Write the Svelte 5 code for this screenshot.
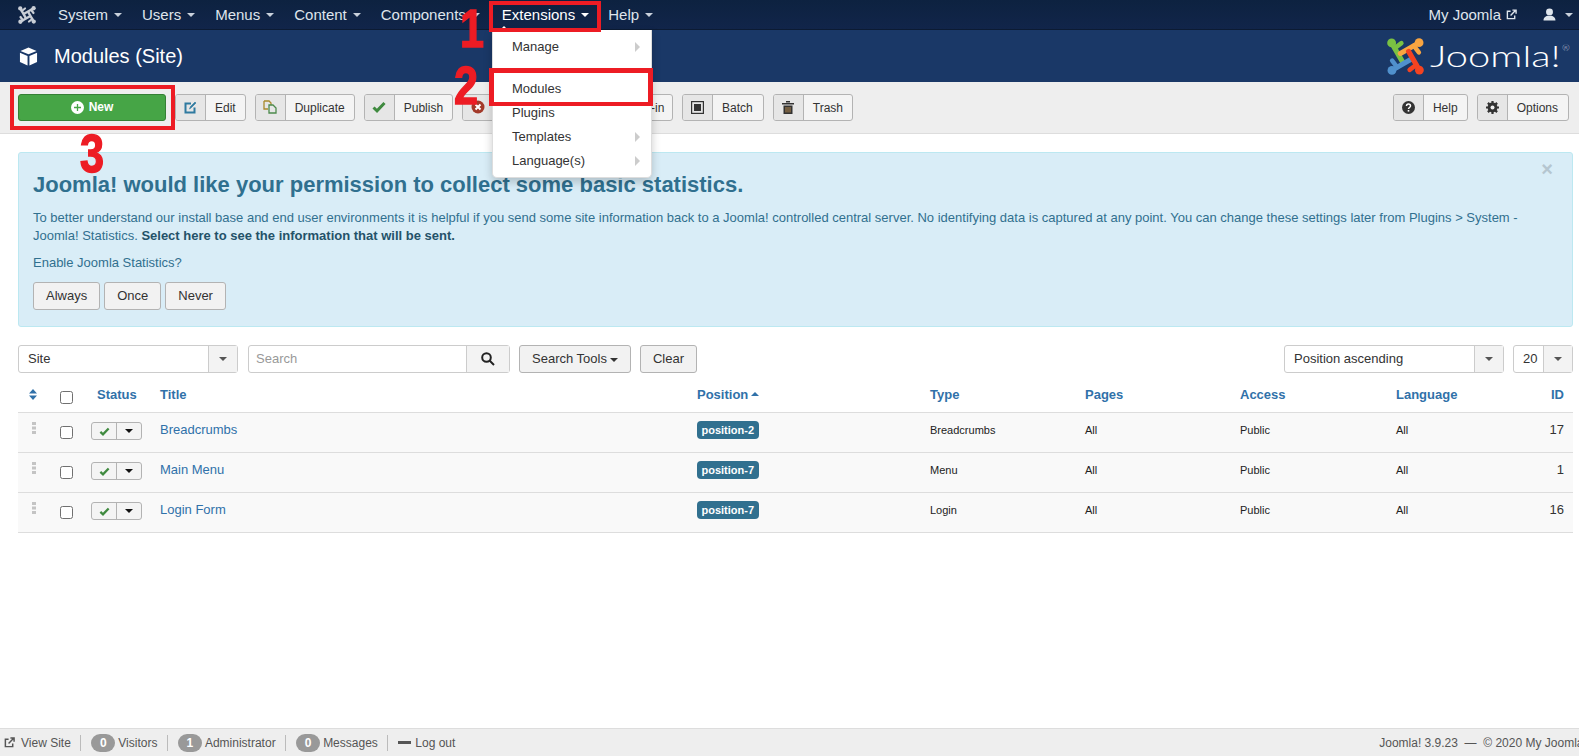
<script>
  const menu = ['System', 'Users', 'Menus', 'Content', 'Components'];
  const rows = [
    { title: 'Breadcrumbs', pos: 'position-2', type: 'Breadcrumbs', id: 17 },
    { title: 'Main Menu', pos: 'position-7', type: 'Menu', id: 1 },
    { title: 'Login Form', pos: 'position-7', type: 'Login', id: 16 }
  ];
</script>

{#snippet joomla(c1, c2, c3, c4, size)}
  <svg class="jlogo" width={size} height={size} viewBox="0 0 36 36">
    {#each [[0, c1], [90, c2], [270, c4], [180, c3]] as [r, c]}
      <g transform="rotate({r} 18 18)" fill={c} stroke={c} stroke-linecap="round" stroke-linejoin="round">
        <circle cx="4.500" cy="4.800" r="4.300" stroke="none" />
        <path d="M5 5.500 L15 23" fill="none" stroke-width="5" />
        <path d="M7.500 10 L14 5" fill="none" stroke-width="4.400" />
      </g>
    {/each}
  </svg>
{/snippet}

{#snippet caret()}<i class="caret"></i>{/snippet}

<div class="page">
  <nav class="topnav">
    <span class="brand">{@render joomla('#c9ced6', '#c9ced6', '#c9ced6', '#c9ced6', 18)}</span>
    {#each menu as m}
      <span class="navitem">{m}{@render caret()}</span>
    {/each}
    <span class="navitem ext">Extensions{@render caret()}</span>
    <span class="navitem help">Help{@render caret()}</span>
    <span class="navright">
      <span class="navitem myj">My Joomla
        <svg width="11" height="11" viewBox="0 0 12 12" fill="none" stroke="#dfe5ec" stroke-width="1.500"><path d="M9.500 7v3.500h-8v-8H5"/><path d="M5 7l5-5M7 1.200h4v4" /></svg>
      </span>
      <span class="navitem user">
        <svg width="13" height="13" viewBox="0 0 12 12" fill="#dfe5ec"><circle cx="6" cy="3.600" r="3.200"/><path d="M0.500 11.500c0-3 2-3.600 3.600-4.300h3.800c1.600.7 3.600 1.300 3.600 4.300z"/></svg>
        {@render caret()}
      </span>
    </span>
  </nav>

  <header class="titlebar">
    <svg class="cube" width="19" height="19" viewBox="0 0 20 20" fill="#fff"><path d="M10 0.500l8.500 3.600L10 7.700 1.500 4.100z"/><path d="M1 6l8 3.400V19.500L1 15.800z"/><path d="M19 6l-8 3.400V19.500l8-3.700z"/></svg>
    <h1>Modules (Site)</h1>
    <span class="logo">
      {@render joomla('#7ac143', '#f9a541', '#f44321', '#5091cd', 37)}
      <span class="wordmark"><span>Joomla!<sup>®</sup></span></span>
    </span>
  </header>

  <div class="toolbar">
    <button class="new"><svg width="13" height="13" viewBox="0 0 13 13"><circle cx="6.500" cy="6.500" r="6.500" fill="#fff"/><path d="M6.500 3v7M3 6.500h7" stroke="#46a546" stroke-width="1.300"/></svg>New</button>
    <button class="tb"><span class="ic">
      <svg width="13" height="13" viewBox="0 0 13 13" fill="none" stroke="#2f7aa0" stroke-width="2"><path d="M7 2.500H1.500v9h9V6.500"/><path d="M5.500 8l1-2.500L11 1l1 1-4.500 4.500z" fill="#2f7aa0" stroke-width=".6"/></svg>
    </span><span class="lb">Edit</span></button>
    <button class="tb"><span class="ic">
      <svg width="14" height="14" viewBox="0 0 14 14" fill="none" stroke-width="1.300"><path d="M1 1h5l2 2v2" stroke="#a98a2d"/><path d="M1 1v8h4" stroke="#a98a2d"/><path d="M6 5h4l3 3v5H6z" stroke="#4c8a4c"/></svg>
    </span><span class="lb">Duplicate</span></button>
    <button class="tb"><span class="ic">
      <svg width="14" height="12" viewBox="0 0 14 12" fill="none" stroke="#3f8a3f" stroke-width="3"><path d="M1.500 6.500l3.500 3.300L12.500 2"/></svg>
    </span><span class="lb">Publish</span></button>
    <button class="tb unpub"><span class="ic">
      <svg width="14" height="14" viewBox="0 0 14 14"><circle cx="7" cy="7" r="6.500" fill="#a33a2a"/><path d="M4.500 4.500l5 5M9.500 4.500l-5 5" stroke="#fff" stroke-width="2"/></svg>
    </span><span class="lb">Unpublish</span></button>
    <button class="tb checkin"><span class="ic"></span><span class="lb">Check-in</span></button>
    <button class="tb wide"><span class="ic">
      <svg width="13" height="13" viewBox="0 0 13 13"><rect x=".6" y=".6" width="11.800" height="11.800" fill="none" stroke="#333" stroke-width="1.200"/><rect x="3" y="3" width="7" height="7" fill="#333"/></svg>
    </span><span class="lb">Batch</span></button>
    <button class="tb"><span class="ic">
      <svg width="12" height="13" viewBox="0 0 12 13" fill="#333"><path d="M0 2h12v1.500H0zM4 0h4v1.500H4z"/><path d="M1.500 4.500h9V13h-9z"/><path d="M4 6v5.500M6 6v5.500M8 6v5.500" stroke="#b58a50" stroke-width="1"/></svg>
    </span><span class="lb">Trash</span></button>
    <span class="spacer"></span>
    <button class="tb"><span class="ic">
      <svg width="13" height="13" viewBox="0 0 13 13"><circle cx="6.500" cy="6.500" r="6.500" fill="#333"/><path d="M4.500 5c0-2.600 4-2.600 4 0 0 1.500-2 1.500-2 3" fill="none" stroke="#fff" stroke-width="1.500"/><rect x="5.700" y="9" width="1.600" height="1.600" fill="#fff"/></svg>
    </span><span class="lb">Help</span></button>
    <button class="tb wide"><span class="ic">
      <svg width="13" height="13" viewBox="0 0 13 13"><circle cx="6.500" cy="6.500" r="3.600" fill="none" stroke="#333" stroke-width="2.600"/><path d="M6.500 0v13M0 6.500h13M1.900 1.900l9.200 9.200M11.100 1.900l-9.200 9.200" stroke="#333" stroke-width="2.200"/><circle cx="6.500" cy="6.500" r="2" fill="#eee"/></svg>
    </span><span class="lb">Options</span></button>
  </div>

  <main>
    <section class="alert">
      <span class="close">×</span>
      <h2>Joomla! would like your permission to collect some basic statistics.</h2>
      <p>To better understand our install base and end user environments it is helpful if you send some site information back to a Joomla! controlled central server. No identifying data is captured at any point. You can change these settings later from Plugins &gt; System - Joomla! Statistics. <b>Select here to see the information that will be sent.</b></p>
      <p class="q">Enable Joomla Statistics?</p>
      <div class="abtns"><button>Always</button><button>Once</button><button>Never</button></div>
    </section>

    <div class="filters">
      <div class="select site"><span>Site</span><em>{@render caret()}</em></div>
      <div class="search"><span class="ph">Search</span><em>
        <svg width="14" height="14" viewBox="0 0 14 14" fill="none" stroke="#222" stroke-width="2"><circle cx="5.500" cy="5.500" r="4.300"/><path d="M8.500 8.500l4.500 4.500"/></svg>
      </em></div>
      <button class="fbtn tools">Search Tools{@render caret()}</button>
      <button class="fbtn clear">Clear</button>
      <span class="spacer"></span>
      <div class="select sort"><span>Position ascending</span><em>{@render caret()}</em></div>
      <div class="select limit"><span>20</span><em>{@render caret()}</em></div>
    </div>

    <div class="grid head">
      <span class="c"><svg width="8" height="11" viewBox="0 0 8 11" fill="#3071a9"><path d="M4 0l4 4.500H0zM4 11L0 6.500h8z"/></svg></span>
      <span class="cb"><i class="check"></i></span>
      <span class="st">Status</span>
      <span>Title</span>
      <span>Position<i class="up"></i></span>
      <span>Type</span>
      <span>Pages</span>
      <span>Access</span>
      <span>Language</span>
      <span class="r">ID</span>
    </div>
    {#each rows as row}
      <div class="grid row">
        <span class="c drag"><svg width="4" height="12" viewBox="0 0 4 12" fill="#c4c4c4"><rect width="4" height="3"/><rect y="4.500" width="4" height="3"/><rect y="9" width="4" height="3"/></svg></span>
        <span class="cb"><i class="check"></i></span>
        <span class="stc"><span class="sbtn"><b><svg width="11" height="9" viewBox="0 0 14 12" fill="none" stroke="#3f8a3f" stroke-width="3"><path d="M1.500 6.500l3.500 3.300L12.500 2"/></svg></b><b><i class="caret dark"></i></b></span></span>
        <a class="tx">{row.title}</a>
        <span class="tx"><span class="badge">{row.pos}</span></span>
        <span class="sm">{row.type}</span>
        <span class="sm">All</span>
        <span class="sm">Public</span>
        <span class="sm">All</span>
        <span class="r id tx">{row.id}</span>
      </div>
    {/each}
  </main>

  <footer class="status">
    <span class="si first"><svg width="11" height="11" viewBox="0 0 12 12" fill="none" stroke="#555" stroke-width="1.600"><path d="M9.500 7v3.500h-8v-8H5"/><path d="M5 7l5-5M7 1.200h4v4"/></svg>View Site</span>
    <span class="si"><i class="pill">0</i>Visitors</span>
    <span class="si"><i class="pill">1</i>Administrator</span>
    <span class="si"><i class="pill">0</i>Messages</span>
    <span class="si last"><i class="minus"></i>Log out</span>
    <span class="copy">Joomla! 3.9.23&nbsp; — &nbsp;© 2020 My Joomla</span>
  </footer>

  <div class="dropdown">
    <span class="di">Manage<i class="sub"></i></span>
    <span class="divider"></span>
    <span class="di">Modules</span>
    <span class="di">Plugins</span>
    <span class="di">Templates<i class="sub"></i></span>
    <span class="di">Language(s)<i class="sub"></i></span>
  </div>

  <span class="hl h1"></span>
  <span class="hl h2"></span>
  <span class="hl h3"></span>
  <span class="num n1">1</span>
  <span class="num n2">2</span>
  <span class="num n3">3</span>
</div>

<style>
  :global(body) { margin: 0; background: #fff; }
  .page { position: relative; width: 1579px; height: 756px; overflow: hidden; display: flex; flex-direction: column; font: 13px/18px "Liberation Sans", Arial, sans-serif; color: #333; }
  .topnav { height: 30px; flex: none; display: flex; align-items: center; background: linear-gradient(#0d2240, #11254a); border-bottom: 1px solid #0c1b33; box-sizing: border-box; font-size: 15px; padding-left: 18px; padding-right: 6px; }
  .brand { width: 40px; display: flex; }
  .navitem { margin-right: 20px; white-space: nowrap; color: #dfe5ec; display: flex; align-items: center; }
  .navitem.ext { color: #fff; margin-left: 2px; margin-right: 19px; }
  .navright { margin-left: auto; display: flex; align-items: center; }
  .myj svg { margin-left: 5px; }
  .myj { margin-right: 26px; }
  .navitem.user { margin-right: 0; }
  .caret { display: inline-block; width: 0; height: 0; border: 4px solid transparent; border-top-color: #c9d1dc; border-bottom: 0; margin-left: 6px; vertical-align: middle; }
  .user .caret { margin-left: 9px; }
  .ext .caret { border-top-color: #fff; }
  .caret.dark { border-top-color: #111; margin: 0; }
  .titlebar { height: 52px; flex: none; display: flex; align-items: center; background: #1a3867; padding-left: 19px; color: #fff; }
  .cube { margin-right: 16px; }
  h1 { font-size: 20px; font-weight: 400; margin: 0; }
  .logo { margin-left: auto; display: flex; align-items: center; margin-right: 17px; }
  .wordmark { width: 132px; margin-left: 6px; color: #fff; display: block; }
  .wordmark > span { display: inline-block; font: 300 30px/1 Lato, sans-serif; transform: scaleX(1.33); transform-origin: 0 50%; white-space: nowrap; }
  .wordmark sup { font-size: 7px; vertical-align: 16px; line-height: 0; color: #ccd; margin-left: 1px; }
  .toolbar { height: 52px; flex: none; box-sizing: border-box; background: #eee; border-bottom: 1px solid #ddd; display: flex; align-items: center; gap: 9px; padding: 0 10px 1px 18px; }
  .spacer { flex: 1; }
  button { font: inherit; padding: 0; cursor: pointer; }
  .new { width: 148px; height: 27px; background: #46a546; border: 1px solid #358035; border-radius: 3px; color: #fff; font-size: 12px; line-height: 27px; font-weight: 700; display: flex; align-items: center; justify-content: center; gap: 5px; }
  .tb { height: 27px; display: flex; align-items: stretch; background: #f4f4f4; border: 1px solid #b3b3b3; border-radius: 3px; font-size: 12px; color: #333; overflow: hidden; box-sizing: border-box; }
  .ic { width: 29px; flex: none; background: #e6e6e6; border-right: 1px solid #b3b3b3; display: flex; align-items: center; justify-content: center; }
  .lb { padding: 0 9px; line-height: 27px; white-space: nowrap; }
  .wide .lb { padding-right: 10px; }
  .unpub { width: 106px; }
  .checkin { width: 96px; }
  main { flex: 1; padding: 18px 6px 0 18px; min-height: 0; }
  .alert { position: relative; height: 175px; box-sizing: border-box; background: #d9edf7; border: 1px solid #bce8f1; border-radius: 3px; color: #31708f; padding: 14px 14px; font-size: 13px; }
  .alert h2 { font-size: 22px; line-height: 36px; margin: 0 0 6px; color: #30708f; }
  .alert p { margin: 0; line-height: 18px; }
  .alert p b { color: #245269; }
  .alert .q { margin-top: 9px; }
  .close { position: absolute; right: 19px; top: 6px; font-size: 20px; font-weight: 700; color: #b5c6d0; line-height: 20px; }
  .abtns { display: flex; gap: 4px; margin-top: 10px; }
  .abtns button { height: 28px; padding: 0 12px; background: #f2f2f2; border: 1px solid #b3b3b3; border-radius: 3px; font-size: 13px; color: #333; }
  .filters { display: flex; align-items: center; gap: 9px; margin-top: 18px; height: 28px; }
  .select { height: 28px; box-sizing: border-box; display: flex; background: #fff; border: 1px solid #ccc; border-radius: 3px; justify-content: space-between; line-height: 25px; padding-left: 9px; }
  .select em { width: 28px; background: #f3f3f3; border-left: 1px solid #ccc; display: flex; align-items: center; justify-content: center; }
  .select .caret { border-top-color: #555; margin: 0; }
  .site { width: 220px; margin-right: 1px; }
  .search { width: 262px; height: 28px; box-sizing: border-box; display: flex; justify-content: space-between; border: 1px solid #ccc; border-radius: 3px; padding-left: 7px; line-height: 26px; }
  .ph { color: #999; }
  .search em { width: 42px; background: #f3f3f3; border-left: 1px solid #ccc; display: flex; align-items: center; justify-content: center; }
  .fbtn { height: 28px; background: #f2f2f2; border: 1px solid #b3b3b3; border-radius: 3px; color: #333; font-size: 13px; }
  .tools { width: 112px; }
  .tools .caret { border-top-color: #333; margin-left: 3px; }
  .clear { width: 57px; }
  .sort { width: 220px; }
  .limit { width: 60px; }
  .grid { display: grid; grid-template-columns: 42px 30px 70px 537px 233px 155px 155px 156px 144px 1fr; align-items: center; }
  .grid > span, .grid > a { min-width: 0; }
  .head { height: 39px; margin-top: 1px; padding-top: 3px; font-weight: 700; color: #3071a9; border-bottom: 1px solid #ddd; font-size: 13px; box-sizing: border-box; }
  .head .cb { margin-top: 5px; }
  .row { height: 40px; background: #f9f9f9; border-bottom: 1px solid #ddd; box-sizing: border-box; align-items: start; padding-top: 9px; }
  .row a { color: #3071a9; }
  .tx { margin-top: -1px; }
  .sm { margin-top: -1px; font-size: 11px; color: #222; }
  .c { padding-left: 11px; display: flex; }
  .row .drag { padding-left: 14px; }
  .cb { display: flex; }
  .row .cb { padding-top: 4px; }
  .check { width: 13px; height: 13px; box-sizing: border-box; border: 1px solid #707070; border-radius: 2.500px; background: #fff; display: block; }
  .st { padding-left: 7px; }
  .sbtn { margin-left: 1px; width: 51px; height: 18px; display: flex; border: 1px solid #b3b3b3; border-radius: 3px; box-sizing: border-box; background: #f4f4f4; }
  .sbtn b { display: flex; align-items: center; justify-content: center; flex: 1; }
  .sbtn b + b { border-left: 1px solid #b3b3b3; }
  .up { display: inline-block; border: 4px solid transparent; border-bottom-color: #3071a9; border-top: 0; margin-left: 3px; vertical-align: 3px; }
  .badge { display: inline-block; background: #31708f; color: #fff; font-size: 11px; font-weight: 700; line-height: 14px; padding: 2px 4.500px; border-radius: 4px; }
  .r { text-align: right; padding-right: 9px; }
  .id { font-size: 13px; }
  .status { height: 28px; flex: none; box-sizing: border-box; background: #eee; border-top: 1px solid #ddd; display: flex; align-items: center; font-size: 12px; color: #555; white-space: nowrap; }
  .si { display: flex; align-items: center; padding: 0 9.500px 0 10px; border-right: 1px solid #bbb; height: 16px; gap: 3px; }
  .si.first { padding-left: 4px; gap: 6px; }
  .si.last { border: 0; gap: 4px; }
  .pill { background: #999; color: #fff; font-style: normal; font-weight: 700; font-size: 12px; min-width: 24px; height: 18px; border-radius: 9px; display: flex; align-items: center; justify-content: center; }
  .minus { width: 13px; height: 2.500px; background: #555; }
  .copy { margin-left: auto; margin-right: -4.500px; color: #555; }
  .dropdown { position: absolute; left: 492px; top: 30px; width: 160px; height: 148px; box-sizing: border-box; background: #fff; border: 1px solid #ddd; border-top: 0; border-radius: 0 0 5px 5px; box-shadow: 0 4px 10px rgba(0, 0, 0, .2); padding-top: 5px; display: flex; flex-direction: column; }
  .dropdown::before { content: ""; position: absolute; left: 7px; top: -4px; border: 4px solid transparent; border-bottom-color: #fff; border-top: 0; }
  .di { position: relative; height: 24px; line-height: 24px; padding-left: 19px; font-size: 13px; color: #333; }
  .divider { height: 18px; }
  .sub { position: absolute; right: 11px; top: 7px; border: 5px solid transparent; border-left-color: #ccc; border-right: 0; }
  .hl { position: absolute; border-style: solid; border-color: #ed1c24; box-sizing: border-box; }
  .h1 { left: 489px; top: 1px; width: 112px; height: 31px; border-width: 4px; }
  .h2 { left: 489px; top: 68px; width: 164px; height: 38px; border-width: 5px 5px 4px; }
  .h3 { left: 10px; top: 85px; width: 165px; height: 45px; border-width: 4px; }
  .num { position: absolute; color: #ed1c24; font: 700 54px/54px "Liberation Sans", sans-serif; transform-origin: 0 0; -webkit-text-stroke: 1.500px #ed1c24; transform: scaleX(.8); }
  .n1 { left: 460px; top: 1px; }
  .n2 { left: 454px; top: 58px; }
  .n3 { left: 80px; top: 126px; }
</style>
